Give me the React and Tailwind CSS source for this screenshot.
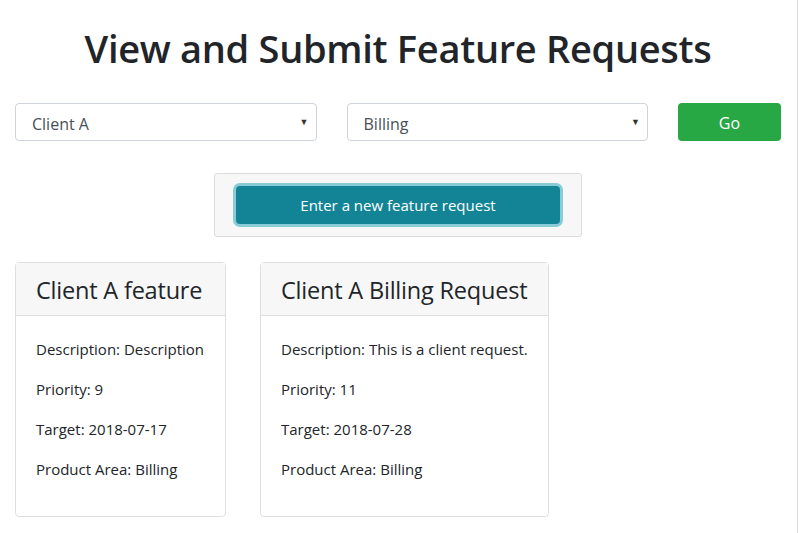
export default function App() {
  const font = { fontFamily: '"Open Sans", "Noto Sans", sans-serif' };
  const Field = ({ children }) => (
    <div className="flex-1 h-[38px] border border-[#ced4da] rounded-[4px] bg-white flex items-center justify-between pl-4 pr-[7px] text-[16px] text-[#495057]">
      <span className="pt-[3px]">{children}</span>
      <span className="text-[9px] text-[#333]">▼</span>
    </div>
  );
  const Card = ({ title, w, desc, pri, target }) => (
    <div className={`${w} border border-[#dfdfdf] rounded-[4px] bg-white flex flex-col`}>
      <div className="bg-[#f7f7f7] border-b border-[#dfdfdf] h-[53px] px-5 pt-[3px] flex items-center text-[23.5px] text-[#212529] whitespace-nowrap tracking-[-0.2px]">
        {title}
      </div>
      <div className="px-5 pt-[21px] pb-[19px] text-[15px] text-[#212529] whitespace-nowrap">
        <p className="h-[24px] leading-[24px] mb-4">Description: {desc}</p>
        <p className="h-[24px] leading-[24px] mb-4">Priority: {pri}</p>
        <p className="h-[24px] leading-[24px] mb-4">Target: {target}</p>
        <p className="h-[24px] leading-[24px] mb-4">Product Area: Billing</p>
      </div>
    </div>
  );
  return (
    <div style={font} className="w-[798px] h-[533px] bg-white relative overflow-hidden">
      <div className="absolute right-0 top-0 w-px h-full bg-[#d9d9d9]" />
      <div className="w-[796px] px-[15px]">
        <h1 className="text-center text-[38px] font-semibold text-[#212529] pt-[22px] h-[103px] leading-[52px] tracking-[-0.3px]">
          View and Submit Feature Requests
        </h1>
        <div className="flex items-center">
          <Field>Client A</Field>
          <div className="w-[30px]" />
          <Field>Billing</Field>
          <div className="w-[30px]" />
          <div className="w-[103px] h-[38px] rounded-[4px] bg-[#28a745] text-white text-[16px] flex items-center justify-center pt-[1px]">
            Go
          </div>
        </div>
        <div className="flex justify-center mt-[32px]">
          <div className="w-[368px] h-[64px] bg-[#f7f7f7] border border-[#dcdcdc] rounded-[3px] flex items-center justify-center">
            <div className="w-[324px] h-[38px] rounded-[4px] bg-[#138496] text-white text-[15px] flex items-center justify-center shadow-[0_0_0_3px_rgba(23,162,184,0.5)]">
              Enter a new feature request
            </div>
          </div>
        </div>
        <div className="flex items-start gap-[34px] mt-[25px]">
          <Card title="Client A feature" w="w-[211px]" desc="Description" pri="9" target="2018-07-17" />
          <Card title="Client A Billing Request" w="w-[289px]" desc="This is a client request." pri="11" target="2018-07-28" />
        </div>
      </div>
    </div>
  );
}
